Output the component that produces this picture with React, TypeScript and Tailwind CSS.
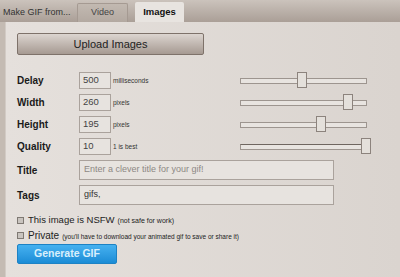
import React from 'react';

const font = { fontFamily: '"Liberation Sans", Arial, sans-serif' };

interface RowProps {
  label: string;
  value: string;
  unit: string;
  thumb: number;
  dark?: boolean;
}

function Slider({ thumb, dark }: { thumb: number; dark?: boolean }) {
  return (
    <div className="relative w-[127px] h-[17px] flex items-center">
      <div
        className={`h-[6px] w-full border border-[#9d958f] bg-[#e8e4e0] ${dark ? 'border-t-[#6f6660]' : ''}`}
      />
      <div
        className="absolute top-0 h-[16px] w-[10px] border border-[#8c837d] bg-[#e4e0db]"
        style={{ left: thumb }}
      />
    </div>
  );
}

function NumberRow({ label, value, unit, thumb, dark }: RowProps) {
  return (
    <div className="flex items-center h-[17px]">
      <div className="w-[62px] text-[10px] font-bold text-[#1a1a1a]">{label}</div>
      <div className="w-[32px] h-[17px] border border-[#aaa29c] bg-[#e7e3df] pl-[3px] flex items-center text-[9.5px] text-[#444]">
        {value}
      </div>
      <div className="w-[129px] pl-[2px] text-[6.5px] text-[#333]">{unit}</div>
      <Slider thumb={thumb} dark={dark} />
    </div>
  );
}

function TextRow({ label, value, placeholder }: { label: string; value?: string; placeholder?: string }) {
  return (
    <div className="flex items-center h-[20px]">
      <div className="w-[62px] text-[10px] font-bold text-[#1a1a1a]">{label}</div>
      <div className="w-[255px] h-[20px] border border-[#aaa29c] bg-[#e7e3df] pl-[4px] flex items-center text-[9px]">
        {value ? (
          <span className="text-[#333]">{value}</span>
        ) : (
          <span className="text-[#8d8884]">{placeholder}</span>
        )}
      </div>
    </div>
  );
}

function Check({ children }: { children: React.ReactNode }) {
  return (
    <div className="flex items-center h-[12px] gap-[4px]">
      <div className="w-[7px] h-[7px] border border-[#7f7973] bg-[#c9c4bf]" />
      <div className="flex items-baseline gap-[3px] whitespace-nowrap text-[#222]">{children}</div>
    </div>
  );
}

export default function App() {
  return (
    <div className="w-[400px] h-[277px] overflow-hidden bg-[#c4bbb3] flex flex-col" style={font}>
      {/* tab strip */}
      <div className="h-[22px] shrink-0 flex items-end bg-gradient-to-b from-[#cbc3bc] to-[#aa9f97]">
        <div className="pl-[3px] w-[77px] h-[22px] flex items-center pt-[3px] text-[9px] text-[#333]">
          Make GIF from...
        </div>
        <div className="w-[51px] h-[19px] border border-b-0 border-[#a59a92] rounded-t-[2px] bg-gradient-to-b from-[#c2b9b1] to-[#b3a9a1] flex items-center justify-center text-[9px] text-[#444]">
          Video
        </div>
        <div className="ml-[7px] w-[49px] h-[20px] rounded-t-[2px] bg-[#e8e4e0] flex items-center justify-center text-[9.5px] font-bold text-[#111]">
          Images
        </div>
      </div>

      <div className="flex flex-1 pl-[5px]">
        <div className="flex-1 bg-gradient-to-r from-[#e5e0dc] to-[#dad4cf] border-l border-[#d2cbc5] pl-[11px] pt-[11px] flex flex-col">
          <div className="w-[187px] h-[22px] rounded-[2px] border border-[#7e726a] bg-gradient-to-b from-[#dcd5d0] to-[#a69a92] flex items-center justify-center text-[11px] text-[#222]">
            Upload Images
          </div>

          <div className="mt-[17px] flex flex-col gap-[5px]">
            <NumberRow label="Delay" value="500" unit="milliseconds" thumb={57} />
            <NumberRow label="Width" value="260" unit="pixels" thumb={103} />
            <NumberRow label="Height" value="195" unit="pixels" thumb={76} />
            <NumberRow label="Quality" value="10" unit="1 is best" thumb={121} dark />
            <TextRow label="Title" placeholder="Enter a clever title for your gif!" />
            <TextRow label="Tags" value="gifs," />
          </div>

          <div className="mt-[9px] flex flex-col gap-[3px]">
            <Check>
              <span className="text-[9.5px]">This image is NSFW</span>
              <span className="text-[7px]">(not safe for work)</span>
            </Check>
            <Check>
              <span className="text-[10px]">Private</span>
              <span className="text-[6.5px]">(you'll have to download your animated gif to save or share it)</span>
            </Check>
          </div>

          <div className="mt-[3px] w-[100px] h-[20px] rounded-[2px] border border-[#1d82c4] bg-gradient-to-b from-[#45b1f0] to-[#1a8cd6] flex items-center justify-center text-[10.5px] font-bold text-[#d9effc]">
            Generate GIF
          </div>
        </div>
      </div>
    </div>
  );
}
